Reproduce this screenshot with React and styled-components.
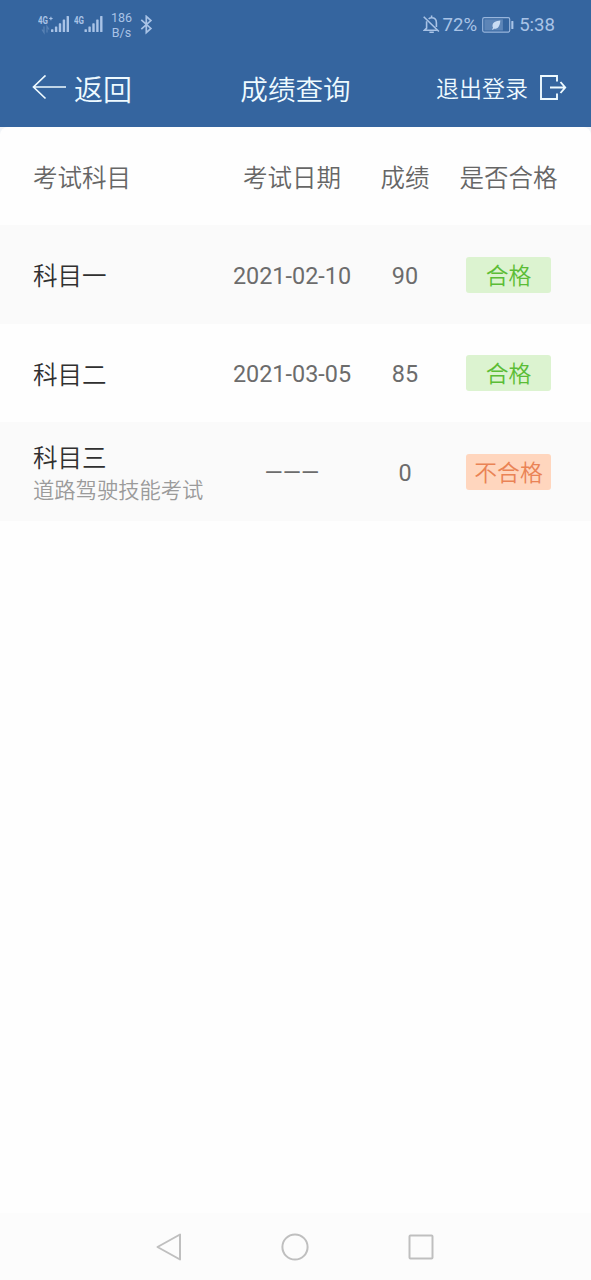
import React from 'react';
import styled, { createGlobalStyle } from 'styled-components';

const GlobalStyle = createGlobalStyle`
  * {
    box-sizing: border-box;
  }

  body {
    margin: 0;
    background: #f1f4f8;
    font-family: Roboto, 'Noto Sans CJK SC', sans-serif;
    font-weight: 350;
  }
`;

const Page = styled.div`
  display: flex;
  flex-direction: column;
  width: 100%;
  height: 1280px;
  overflow: hidden;
`;

// Blue area behind the status bar and the title bar
const TopArea = styled.header`
  height: 127px;
  background: #35659f;
  color: #eefaff;
`;

const StatusBar = styled.div`
  display: flex;
  justify-content: space-between;
  height: 49px;
  padding: 0 36px 0 38px;
  color: #a9c3e6;
`;

const StatusGroup = styled.div`
  display: flex;
  align-items: center;
`;

const Spacer = styled.span`
  width: 4px;
`;

const NetSpeed = styled.div`
  width: 23px;
  margin: 0 7px 0 7px;
  font-size: 12.5px;
  font-weight: 400;
  line-height: 15px;
  text-align: center;
`;

const StatusText = styled.span`
  font-size: 18.6px;
  font-weight: 400;
  line-height: 49px;
  padding-top: 1px;
  margin-left: ${({ $gap }) => $gap || 0}px;
`;

const BatteryBox = styled.span`
  display: flex;
  margin: 0 5px 0 5px;
`;

const TitleBar = styled.div`
  display: grid;
  grid-template-columns: 1fr auto 1fr;
  align-items: center;
  height: 78px;
  padding: 0 24px;
`;

const BackButton = styled.div`
  display: flex;
  align-items: center;
  gap: 8px;
  padding-left: 8px;
  font-size: 29px;
  line-height: 40px;
`;

const Title = styled.h1`
  margin: 0;
  padding-top: 5px;
  font-size: 27.6px;
  font-weight: 350;
  line-height: 40px;
`;

const LogoutButton = styled.div`
  display: flex;
  align-items: center;
  justify-content: flex-end;
  gap: 11px;
  font-size: 23px;
  line-height: 40px;
`;

const ButtonLabel = styled.span`
  padding-top: ${({ $drop }) => $drop}px;
`;

const Table = styled.main`
  flex: 1;
  background: #fefefe;
  border-radius: 8px 8px 0 0;
`;

const Row = styled.div`
  display: grid;
  grid-template-columns: 195px 128px 98px 109px;
  align-items: center;
  height: ${({ $head }) => ($head ? '98.3px' : '98.5px')};
  padding: 0 28px 0 33px;
  background: ${({ $shaded }) => ($shaded ? '#fafafa' : 'transparent')};
`;

const HeadCell = styled.div`
  font-size: 24.5px;
  line-height: 36px;
  color: #666;
  text-align: ${({ $left }) => ($left ? 'left' : 'center')};
  white-space: nowrap;
  padding-top: 6px;
`;

const Subject = styled.div`
  padding-top: ${({ $alone }) => ($alone ? '5px' : '2.4px')};
  font-size: 24.5px;
  line-height: 36px;
  color: #303030;
`;

const SubjectNote = styled.div`
  font-size: 21.3px;
  line-height: 28px;
  color: #9b9b9b;
  white-space: nowrap;
`;

const Value = styled.div`
  font-size: 23.4px;
  font-weight: 400;
  line-height: 36px;
  color: #6c6c6c;
  text-align: center;
  padding-top: 2px;
`;

const Badge = styled.div`
  justify-self: center;
  width: 85px;
  height: 36px;
  border-radius: 3px;
  font-size: 22.8px;
  line-height: 39px;
  text-align: center;
  color: ${({ $passed }) => ($passed ? '#5bbd36' : '#ea8355')};
  background: ${({ $passed }) => ($passed ? '#dcf3d0' : '#ffd6be')};
`;

const SystemNav = styled.nav`
  display: flex;
  justify-content: center;
  align-items: center;
  gap: 97.7px;
  height: 67px;
  padding-right: 1px;
  background: #fcfcfc;
`;

const rows = [
  { subject: '科目一', date: '2021-02-10', score: 90, passed: true },
  { subject: '科目二', date: '2021-03-05', score: 85, passed: true },
  { subject: '科目三', note: '道路驾驶技能考试', date: '———', score: 0, passed: false },
];

const Signal = ({ label, plus }) => (
  <svg width={plus ? 32 : 29} height="22" viewBox={plus ? '0 0 32 22' : '0 0 29 22'} fill="currentColor">
    <text x="0" y="10" fontSize="10" fontWeight="700" textLength="10" lengthAdjust="spacingAndGlyphs">{label}</text>
    {plus && <path d="M11.2 4.5h3.4M12.9 2.8v3.4" stroke="currentColor" strokeWidth="1.1" />}
    {plus && <path d="M6 12.5v6l-2-3M9 18.5v-6l2 3" stroke="currentColor" strokeWidth="1.3" opacity=".3" fill="none" />}
    <g transform={plus ? 'translate(13 0)' : 'translate(10.5 0)'}>
      <rect x="0" y="15.2" width="2.4" height="2.8" rx=".6" />
      <rect x="3.9" y="12.5" width="2.4" height="5.5" rx=".6" />
      <rect x="7.8" y="9.3" width="2.4" height="8.7" rx=".6" />
      <rect x="11.7" y="5.5" width="2.4" height="12.5" rx=".6" />
      <rect x="15.6" y="2" width="2.4" height="16" rx=".6" />
    </g>
  </svg>
);

const Bluetooth = () => (
  <svg width="13" height="20" viewBox="0 0 13 20" fill="none" stroke="currentColor" strokeWidth="1.7">
    <path d="M1.3 4.9l9.6 8.5-4.6 4.2V1.4l4.6 4.2-9.6 8.5" />
  </svg>
);

const Muted = () => (
  <svg width="18" height="20" viewBox="0 0 18 20" fill="none" stroke="currentColor" strokeWidth="1.6">
    <path d="M5.6 3.8C6.8 3 7.8 2.7 8.6 2.7c3 0 4.8 2.2 4.8 5v4.2M3.6 6.2v7l-2.3 2.1h12.6M8.6 .6v2" />
    <path d="M6.4 17.2h4.4M.7 1.7l15.2 14.8" />
  </svg>
);

const Battery = () => (
  <svg width="32" height="16" viewBox="0 0 32 16" fill="none">
    <rect x=".7" y=".7" width="27" height="14.4" rx="1.5" stroke="currentColor" strokeWidth="1.2" opacity=".85" />
    <rect x="2.4" y="2.3" width="18.5" height="11.2" fill="currentColor" opacity=".35" />
    <path d="M18.3 3.4c-4.6.4-7.8 1.8-7.8 5.4 0 .9.2 1.5.6 2L10 12.6l.9.2 1.1-1.1c3.6.5 6-2.2 6.3-8.3z" fill="#c9dcf3" />
    <rect x="29.3" y="4" width="2.1" height="8" rx=".5" fill="currentColor" />
  </svg>
);

const App = () => {
  return (
    <Page>
      <GlobalStyle />
      <TopArea>
        <StatusBar>
          <StatusGroup>
            <Signal label="4G" plus />
            <Spacer />
            <Signal label="4G" />
            <NetSpeed>186<br />B/s</NetSpeed>
            <Bluetooth />
          </StatusGroup>
          <StatusGroup>
            <Muted />
            <StatusText $gap={2}>72%</StatusText>
            <BatteryBox><Battery /></BatteryBox>
            <StatusText>5:38</StatusText>
          </StatusGroup>
        </StatusBar>
        <TitleBar>
          <BackButton>
            <svg width="34" height="26" viewBox="0 0 34 26" fill="none" stroke="currentColor" strokeWidth="1.7">
              <path d="M34 12H2M13.5 .5L1.5 12l12 11.5" />
            </svg>
            <ButtonLabel $drop={5}>返回</ButtonLabel>
          </BackButton>
          <Title>成绩查询</Title>
          <LogoutButton>
            <ButtonLabel $drop={3}>退出登录</ButtonLabel>
            <svg width="28" height="26" viewBox="0 0 28 26" fill="none" stroke="currentColor" strokeWidth="1.9">
              <path d="M18 6.5V1H2v23h16v-5.5M11 12.5h15.5M21.5 7l4.7 5.5-4.7 5.5" />
            </svg>
          </LogoutButton>
        </TitleBar>
      </TopArea>
      <Table>
        <Row $head>
          <HeadCell $left>考试科目</HeadCell>
          <HeadCell>考试日期</HeadCell>
          <HeadCell>成绩</HeadCell>
          <HeadCell>是否合格</HeadCell>
        </Row>
        {rows.map((row, i) => (
          <Row key={row.subject} $shaded={i % 2 === 0}>
            <div>
              <Subject $alone={!row.note}>{row.subject}</Subject>
              {row.note && <SubjectNote>{row.note}</SubjectNote>}
            </div>
            <Value>{row.date}</Value>
            <Value>{row.score}</Value>
            <Badge $passed={row.passed}>{row.passed ? '合格' : '不合格'}</Badge>
          </Row>
        ))}
      </Table>
      <SystemNav>
        <svg width="28" height="28" viewBox="0 0 28 28" fill="none" stroke="#bfbfbf" strokeWidth="2" strokeLinejoin="round">
          <path d="M25 1.5v25L2.5 14z" />
        </svg>
        <svg width="28" height="28" viewBox="0 0 28 28" fill="none" stroke="#bfbfbf" strokeWidth="2">
          <circle cx="14" cy="14" r="12.6" />
        </svg>
        <svg width="28" height="28" viewBox="0 0 28 28" fill="none" stroke="#bfbfbf" strokeWidth="2">
          <rect x="2.5" y="2.5" width="23" height="23" rx="1" />
        </svg>
      </SystemNav>
    </Page>
  );
};

export default App;
